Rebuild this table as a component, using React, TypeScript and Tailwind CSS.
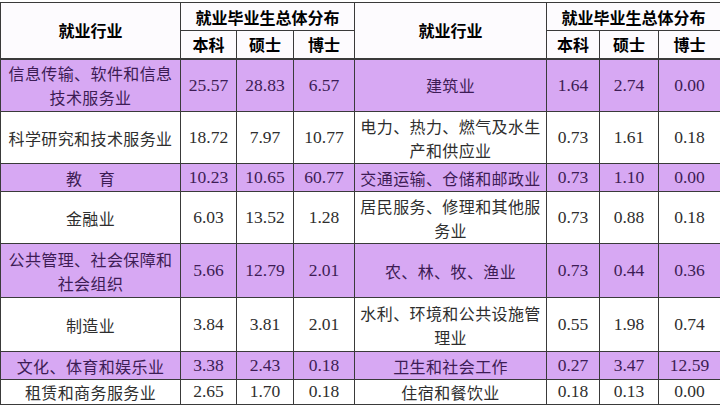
import React from "react";

type Row = {
  a: string[];
  av: [string, string, string];
  b: string[];
  bv: [string, string, string];
  h: string;
  purple: boolean;
};

const rows: Row[] = [
  { a: ["信息传输、软件和信息", "技术服务业"], av: ["25.57", "28.83", "6.57"], b: ["建筑业"], bv: ["1.64", "2.74", "0.00"], h: "h-[53px]", purple: true },
  { a: ["科学研究和技术服务业"], av: ["18.72", "7.97", "10.77"], b: ["电力、热力、燃气及水生", "产和供应业"], bv: ["0.73", "1.61", "0.18"], h: "h-[52px]", purple: false },
  { a: ["教　育"], av: ["10.23", "10.65", "60.77"], b: ["交通运输、仓储和邮政业"], bv: ["0.73", "1.10", "0.00"], h: "h-[28px]", purple: true },
  { a: ["金融业"], av: ["6.03", "13.52", "1.28"], b: ["居民服务、修理和其他服", "务业"], bv: ["0.73", "0.88", "0.18"], h: "h-[52px]", purple: false },
  { a: ["公共管理、社会保障和", "社会组织"], av: ["5.66", "12.79", "2.01"], b: ["农、林、牧、渔业"], bv: ["0.73", "0.44", "0.36"], h: "h-[54px]", purple: true },
  { a: ["制造业"], av: ["3.84", "3.81", "2.01"], b: ["水利、环境和公共设施管", "理业"], bv: ["0.55", "1.98", "0.74"], h: "h-[54px]", purple: false },
  { a: ["文化、体育和娱乐业"], av: ["3.38", "2.43", "0.18"], b: ["卫生和社会工作"], bv: ["0.27", "3.47", "12.59"], h: "h-[28px]", purple: true },
  { a: ["租赁和商务服务业"], av: ["2.65", "1.70", "0.18"], b: ["住宿和餐饮业"], bv: ["0.18", "0.13", "0.00"], h: "h-[25px]", purple: false },
];

const cjk = "font-['Noto_Sans_CJK_SC',sans-serif]";
const num = "font-['Liberation_Serif','Times_New_Roman',serif]";

function Lines({ lines }: { lines: string[] }) {
  return (
    <div className="flex flex-col items-center">
      {lines.map((l, i) => (
        <span key={i} className="whitespace-nowrap">{l}</span>
      ))}
    </div>
  );
}

export default function App() {
  return (
    <div className="w-[720px] h-[408px] bg-white overflow-hidden pt-[2px]">
      <table className="w-[720px] border-collapse table-fixed">
        <colgroup>
          <col className="w-[180px]" />
          <col className="w-[56px]" />
          <col className="w-[57px]" />
          <col className="w-[61px]" />
          <col className="w-[192px]" />
          <col className="w-[53px]" />
          <col className="w-[59px]" />
          <col className="w-[62px]" />
        </colgroup>
        <thead className={`${cjk} font-bold text-[16px] text-black`}>
          <tr className="h-[28px] bg-[#fdfbfe]">
            <th rowSpan={2} className="border border-[#3a3a3a] border-b-2 font-bold">就业行业</th>
            <th colSpan={3} className="border border-[#3a3a3a] font-bold leading-none">就业毕业生总体分布</th>
            <th rowSpan={2} className="border border-[#3a3a3a] border-b-2 font-bold">就业行业</th>
            <th colSpan={3} className="border border-[#3a3a3a] font-bold leading-none">就业毕业生总体分布</th>
          </tr>
          <tr className="h-[28px] bg-[#fdfbfe]">
            {["本科", "硕士", "博士", "本科", "硕士", "博士"].map((t, i) => (
              <th key={i} className="border border-[#3a3a3a] border-b-2 font-bold leading-none">{t}</th>
            ))}
          </tr>
        </thead>
        <tbody>
          {rows.map((r, i) => {
            const bg = r.purple ? "bg-[#d7a8f3]" : "bg-white";
            const tc = r.purple ? "text-[#3d1c55]" : "text-[#2e2e2e]";
            const cell = `border border-[#3a3a3a] ${tc} text-center p-0`;
            return (
              <tr key={i} className={`${r.h} ${bg}`}>
                <td className={`${cell} ${cjk} text-[16px] leading-[24px] tracking-[0.4px]`}>
                  <Lines lines={r.a} />
                </td>
                {r.av.map((v, j) => (
                  <td key={j} className={`${cell} ${num} text-[17.5px] leading-none`}>{v}</td>
                ))}
                <td className={`${cell} ${cjk} text-[16px] leading-[24px] tracking-[0.4px]`}>
                  <Lines lines={r.b} />
                </td>
                {r.bv.map((v, j) => (
                  <td key={j} className={`${cell} ${num} text-[17.5px] leading-none`}>{v}</td>
                ))}
              </tr>
            );
          })}
        </tbody>
      </table>
    </div>
  );
}
